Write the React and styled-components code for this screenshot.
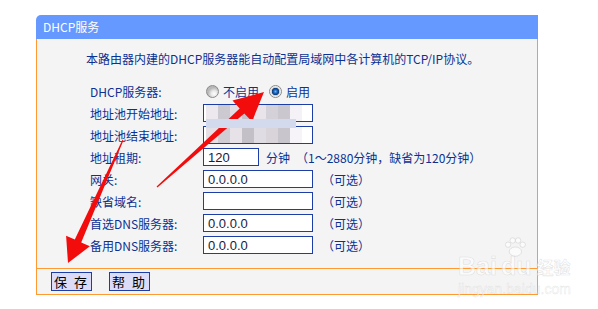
import React from "react";
import styled, { createGlobalStyle } from "styled-components";

const GlobalStyle = createGlobalStyle`
  body {
    margin: 0;
    background: #fff;
    font-family: "Noto Sans CJK SC", "Noto Sans", sans-serif;
  }
`;

const blurBlocks = ['#ece8ee', '#cdc9d1', '#e2dee4', '#c6c2ca', '#e8e4ea', '#d5d1d9', '#cbc7cf', '#f4f2f6'];
const blurBlocks2 = ['#e4e0e6', '#d0ccd4', '#e6e2e8', '#c4c0c8', '#e0dce4', '#d8d4da', '#c9c5cd', '#f6f4f8'];

const optionalRows = [
    { label: '网关:', value: '0.0.0.0' },
    { label: '缺省域名:', value: '' },
    { label: '首选DNS服务器:', value: '0.0.0.0' },
    { label: '备用DNS服务器:', value: '0.0.0.0' },
];

export default function App(){
    return(
        <Page>
            <GlobalStyle />
            <Panel>
                <Header>DHCP服务</Header>
                <Body>
                    <Desc>本路由器内建的DHCP服务器能自动配置局域网中各计算机的TCP/IP协议。</Desc>
                    <Form>
                        <Row>
                            <Label>DHCP服务器:</Label>
                            <Radios>
                                <Radio />
                                <RadioText>不启用</RadioText>
                                <Radio checked />
                                <RadioText>启用</RadioText>
                            </Radios>
                        </Row>
                        <Row>
                            <Label>地址池开始地址:</Label>
                            <Field width={110} blurred band>
                                {blurBlocks.map((c, i) => <Pixel key={i} color={c} />)}
                            </Field>
                        </Row>
                        <Row>
                            <Label>地址池结束地址:</Label>
                            <Field width={110} blurred>
                                {blurBlocks2.map((c, i) => <Pixel key={i} color={c} />)}
                            </Field>
                        </Row>
                        <Row>
                            <Label>地址租期:</Label>
                            <Field width={56}>120</Field>
                            <Unit>分钟</Unit>
                            <Hint>（1～2880分钟，缺省为120分钟）</Hint>
                        </Row>
                        {optionalRows.map((r) => (
                            <Row key={r.label}>
                                <Label>{r.label}</Label>
                                <Field width={110}>{r.value}</Field>
                                <Optional>（可选）</Optional>
                            </Row>
                        ))}
                    </Form>
                </Body>
                <Footer>
                    <Button>保 存</Button>
                    <Button>帮 助</Button>
                </Footer>
            </Panel>

            <Watermark>
                <Logo>
                    <span>Bai</span>
                    <Du>
                        du
                        <Paw viewBox="0 0 30 26">
                            <circle cx="6" cy="10" r="3.5" />
                            <circle cx="12" cy="4.5" r="3.5" />
                            <circle cx="19" cy="4.5" r="3.5" />
                            <circle cx="25" cy="10" r="3.5" />
                            <ellipse cx="15.5" cy="19" rx="8" ry="6" />
                        </Paw>
                    </Du>
                    <Jing>经验</Jing>
                </Logo>
                <Site>jingyan.baidu.com</Site>
            </Watermark>

            <Arrows viewBox="0 0 598 309">
                <polygon points="157.4,187.4 244.3,113.6 252,121.5 264,92 232.5,100.5 239.7,108.4 156.6,186.6" />
                <polygon points="123.5,140.2 81.2,242.4 89.9,246.3 68,263 66.1,235.7 74.8,239.6 122.5,139.8" />
            </Arrows>
        </Page>
    )
}

const navy = '#0b3193';
const orange = '#ff9a33';
const boxBlue = '#1d3ea6';

const Page = styled.div`
    position: relative;
    width: 598px;
    height: 309px;
    box-sizing: border-box;
    padding: 15px 0 0 36px;
    overflow: hidden;
`;

const Panel = styled.div`
    width: 502px;
`;

const Header = styled.div`
    height: 24px;
    line-height: 24px;
    padding-left: 7px;
    background-color: #6699ff;
    border-top-left-radius: 5px;
    color: white;
    font-size: 12px;
`;

const Body = styled.div`
    background-color: #f4f4f4;
    border-left: 1px solid ${orange};
    border-right: 1px solid ${orange};
    padding: 12px 0 12px 49px;
`;

const Desc = styled.div`
    color: ${navy};
    font-size: 12px;
    line-height: 16px;
`;

const Form = styled.div`
    margin-top: 13px;
    padding-left: 4px;
`;

const Row = styled.div`
    display: flex;
    align-items: center;
    height: 22px;
`;

const Label = styled.div`
    width: 113px;
    flex-shrink: 0;
    color: ${navy};
    font-size: 12px;
`;

const Radios = styled.div`
    display: flex;
    align-items: center;
    padding-left: 3px;
`;

const Radio = styled.span`
    width: 13px;
    height: 13px;
    box-sizing: border-box;
    border-radius: 50%;
    border: 1px solid #8a8a8a;
    background: ${p => p.checked
        ? 'radial-gradient(circle at 50% 50%, #6ab8f2 0, #1a64bc 1.8px, #0b3b7a 3.4px, #cfcfcf 4px, #fafafa 5.5px)'
        : 'radial-gradient(circle at 65% 70%, #ffffff 0, #e8e8e8 3px, #b8b8b8 6px)'};
`;

const RadioText = styled.span`
    color: ${navy};
    font-size: 12px;
    margin: 0 10px 0 4px;
`;

const Field = styled.div`
    position: relative;
    width: ${p => p.width}px;
    height: 18px;
    box-sizing: border-box;
    display: flex;
    align-items: center;
    padding-left: ${p => p.blurred ? 2 : 4}px;
    border: 1px solid ${boxBlue};
    background-color: white;
    color: #1a1a3c;
    font-family: "Liberation Sans", Arial, sans-serif;
    font-size: 13px;

    &::after {
        content: '';
        display: ${p => p.band ? 'block' : 'none'};
        position: absolute;
        left: 2px;
        right: 16px;
        top: 14px;
        height: 9px;
        background-color: #d3daee;
        z-index: 1;
    }
`;

const Pixel = styled.span`
    width: 12px;
    height: 16px;
    background-color: ${p => p.color};
`;

const Unit = styled.span`
    color: ${navy};
    font-size: 12px;
    margin-left: 7px;
`;

const Hint = styled.span`
    color: ${navy};
    font-size: 12px;
    margin-left: 6px;
`;

const Optional = styled.span`
    color: ${navy};
    font-size: 12px;
    margin-left: 9px;
`;

const Footer = styled.div`
    height: 25px;
    display: flex;
    align-items: center;
    gap: 17px;
    padding-left: 14px;
    background-color: #f4f4f4;
    border: 1px solid ${orange};
`;

const Button = styled.button`
    width: 41px;
    height: 19px;
    padding: 0;
    border: 1px solid ${boxBlue};
    background-color: #dcdcf8;
    color: black;
    font-family: "Noto Sans CJK SC", sans-serif;
    font-size: 13px;
    line-height: 17px;
    letter-spacing: 2px;
`;

const Watermark = styled.div`
    position: absolute;
    left: 458px;
    top: 254px;
    display: flex;
    flex-direction: column;
    align-items: flex-start;
    pointer-events: none;
`;

const Logo = styled.div`
    display: flex;
    align-items: flex-end;
    font-family: "Liberation Sans", Arial, sans-serif;
    font-weight: bold;
    font-size: 25px;
    line-height: 24px;
    color: rgba(255, 255, 255, 0.6);
    -webkit-text-stroke: 0.6px rgba(150, 150, 150, 0.28);
`;

const Du = styled.span`
    position: relative;
    margin-left: 4px;
`;

const Paw = styled.svg`
    position: absolute;
    left: 2px;
    top: -17px;
    width: 24px;
    height: 20px;
    fill: rgba(255, 255, 255, 0.6);
    stroke: rgba(150, 150, 150, 0.3);
    stroke-width: 1;
`;

const Jing = styled.span`
    font-family: "Noto Sans CJK SC", sans-serif;
    font-size: 17px;
    line-height: 22px;
    margin-left: 5px;
`;

const Site = styled.div`
    margin-top: 3px;
    font-family: "Liberation Sans", Arial, sans-serif;
    font-size: 14px;
    color: rgba(255, 255, 255, 0.6);
    -webkit-text-stroke: 0.5px rgba(150, 150, 150, 0.25);
`;

const Arrows = styled.svg`
    position: absolute;
    left: 0;
    top: 0;
    width: 598px;
    height: 309px;
    pointer-events: none;
    fill: #f20c0c;
`;
